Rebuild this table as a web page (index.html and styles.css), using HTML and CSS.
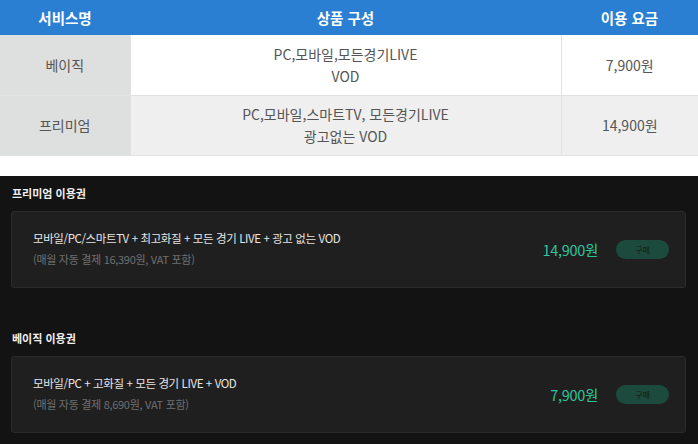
FILE: index.html
```html
<!DOCTYPE html>
<html lang="ko">

<head>
    <meta charset="UTF-8">
    <title>이용권 안내</title>
    <link rel="stylesheet" href="styles.css">
</head>

<body>
    <table class="price-table">
        <thead>
            <tr>
                <th class="col-name">서비스명</th>
                <th>상품 구성</th>
                <th class="col-price">이용 요금</th>
            </tr>
        </thead>
        <tbody>
            <tr>
                <td class="cell-name">베이직</td>
                <td>PC,모바일,모든경기LIVE<br>VOD</td>
                <td>7,900원</td>
            </tr>
            <tr class="row-alt">
                <td class="cell-name">프리미엄</td>
                <td>PC,모바일,스마트TV, 모든경기LIVE<br>광고없는 VOD</td>
                <td>14,900원</td>
            </tr>
        </tbody>
    </table>

    <div class="pass-section">
        <h2 class="pass-title">프리미엄 이용권</h2>
        <div class="pass-card">
            <div class="pass-info">
                <p class="pass-desc">모바일/PC/스마트TV + 최고화질 + 모든 경기 LIVE + 광고 없는 VOD</p>
                <p class="pass-note">(매월 자동 결제 16,390원, VAT 포함)</p>
            </div>
            <span class="pass-price">14,900원</span>
            <button class="buy-btn" type="button">구매</button>
        </div>

        <h2 class="pass-title">베이직 이용권</h2>
        <div class="pass-card">
            <div class="pass-info">
                <p class="pass-desc">모바일/PC + 고화질 + 모든 경기 LIVE + VOD</p>
                <p class="pass-note">(매월 자동 결제 8,690원, VAT 포함)</p>
            </div>
            <span class="pass-price">7,900원</span>
            <button class="buy-btn" type="button">구매</button>
        </div>
    </div>
</body>

</html>
```

FILE: styles.css
```css
* {
    box-sizing: border-box;
    margin: 0;
    padding: 0;
}

body {
    background: #fff;
    font-family: "Noto Sans CJK KR", "Noto Sans", sans-serif;
    width: 698px;
    height: 444px;
    overflow: hidden;
}

.price-table {
    width: 100%;
    border-collapse: collapse;
    table-layout: fixed;
    font-size: 14px;
    color: #555;
}

.price-table th {
    background: #2a7fd3;
    color: #fff;
    font-weight: bold;
    height: 35px;
    font-size: 14.5px;
    text-align: center;
}

.price-table .col-name {
    width: 130px;
}

.price-table .col-price {
    width: 137px;
}

.price-table td {
    height: 60px;
    text-align: center;
    line-height: 22px;
    border-bottom: 1px solid #e2e2e2;
    border-left: 1px solid #e2e2e2;
}

.price-table td.cell-name {
    background: #dedfdf;
    border-left: none;
}

.row-alt td {
    background: #efefef;
}

.pass-section {
    margin-top: 20px;
    background: #131313;
    padding: 10px 12px 0 11px;
    height: 270px;
}

.pass-title {
    font-size: 11px;
    font-weight: bold;
    color: #f0f0f0;
    line-height: 14px;
    margin-left: 1px;
}

.pass-card {
    display: flex;
    align-items: center;
    height: 77px;
    margin-top: 11px;
    margin-bottom: 43px;
    padding: 0 16px 0 21px;
    background: #1f1f1f;
    border: 1px solid #2b2b2b;
    border-radius: 3px;
}

.pass-info {
    flex: 1;
    margin-top: -2px;
}

.pass-desc {
    font-size: 11.5px;
    color: #e6e6e6;
    line-height: 16px;
    letter-spacing: -0.4px;
}

.pass-note {
    font-size: 11px;
    color: #6f6f6f;
    line-height: 16px;
    margin-top: 5px;
    letter-spacing: -0.3px;
}

.pass-price {
    font-size: 14.5px;
    color: #2cc59d;
    margin-right: 18px;
    letter-spacing: -0.3px;
}

.buy-btn {
    width: 53px;
    height: 19px;
    border: none;
    border-radius: 10px;
    background: #1c4a3d;
    color: #0f1f1a;
    font-family: inherit;
    font-size: 8px;
}
```
